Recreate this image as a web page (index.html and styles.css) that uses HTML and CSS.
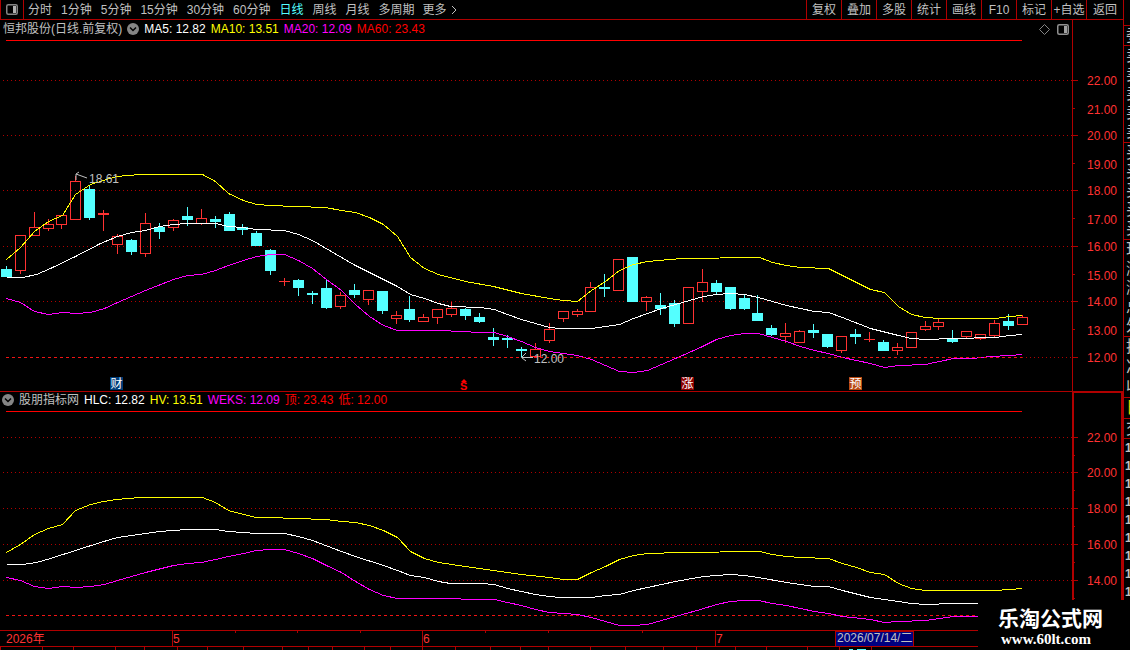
FILE: index.html
```html
<!DOCTYPE html>
<html lang="zh-CN">
<head>
    <meta charset="UTF-8">
    <meta name="viewport" content="width=device-width, initial-scale=1.0">
    <title>恒邦股份 日线</title>
    <link rel="stylesheet" href="styles.css">
</head>
<body>
    <main class="main">
        <nav class="toolbar">
            <button class="layout-btn" type="button" aria-label="布局">
                <svg width="12" height="11" viewBox="0 0 12 11">
                    <rect x="0.75" y="0.75" width="10.5" height="9.5" rx="1.5" fill="none" stroke="#858585" stroke-width="1.5"/>
                    <rect x="7" y="2" width="3" height="7" fill="#b0b0b0"/>
                </svg>
            </button>
            <div class="periods">
                <button type="button">分时</button>
                <button type="button">1分钟</button>
                <button type="button">5分钟</button>
                <button type="button">15分钟</button>
                <button type="button">30分钟</button>
                <button type="button">60分钟</button>
                <button type="button" class="active">日线</button>
                <button type="button">周线</button>
                <button type="button">月线</button>
                <button type="button">多周期</button>
                <button type="button" class="more">更多
                    <svg width="6" height="10" viewBox="0 0 6 10"><path d="M1 1L5 5L1 9" fill="none" stroke="#c0c0c0"/></svg>
                </button>
            </div>
            <div class="tools">
                <button type="button">复权</button>
                <button type="button">叠加</button>
                <button type="button">多股</button>
                <button type="button">统计</button>
                <button type="button">画线</button>
                <button type="button">F10</button>
                <button type="button">标记</button>
                <button type="button">+自选</button>
                <button type="button">返回</button>
            </div>
        </nav>

        <section class="panel">
            <header class="panel-head">
                <div class="legend">
                    <span>恒邦股份(日线.前复权)</span>
                    <svg width="12" height="12" viewBox="0 0 12 12"><circle cx="6" cy="6" r="6" fill="#858585"/><path d="M3 4.5L6 7.5L9 4.5" fill="none" stroke="#000" stroke-width="1.5"/></svg>
                    <span class="white">MA5: 12.82</span>
                    <span class="yellow">MA10: 13.51</span>
                    <span class="magenta">MA20: 12.09</span>
                    <span class="red">MA60: 23.43</span>
                    <div class="head-icons">
                        <svg width="11" height="11" viewBox="0 0 11 11"><path d="M5.5 0.5L10.5 5.5L5.5 10.5L0.5 5.5Z" fill="none" stroke="#858585"/></svg>
                        <svg width="12" height="11" viewBox="0 0 12 11">
                            <rect x="0.75" y="0.75" width="10.5" height="9.5" rx="1.5" fill="none" stroke="#909090" stroke-width="1.5"/>
                            <rect x="7" y="2" width="3" height="7" fill="#a0a0a0"/>
                        </svg>
                    </div>
                </div>
                <div class="corner"></div>
            </header>
            <svg class="chart" id="kline" viewBox="0 39 1123 352"></svg>
        </section>

        <section class="panel indicator">
            <header class="panel-head">
                <div class="legend">
                    <svg width="12" height="12" viewBox="0 0 12 12"><circle cx="6" cy="6" r="6" fill="#858585"/><path d="M3 4.5L6 7.5L9 4.5" fill="none" stroke="#000" stroke-width="1.5"/></svg>
                    <span>股朋指标网</span>
                    <span class="white">HLC: 12.82</span>
                    <span class="yellow">HV: 13.51</span>
                    <span class="magenta">WEKS: 12.09</span>
                    <span class="red">顶: 23.43</span>
                    <span class="red">低: 12.00</span>
                </div>
                <div class="corner"></div>
            </header>
            <svg class="chart" id="bands" viewBox="0 411 1123 219"></svg>
        </section>

        <svg class="chart" id="timeline" viewBox="0 630 1123 20"></svg>
    </main>

    <aside class="quote">
        <div class="group ratio"><span>委</span></div>
        <div class="group five"><span>卖</span><span>卖</span><span>卖</span><span>卖</span><span>卖</span></div>
        <div class="group five"><span>买</span><span>买</span><span>买</span><span>买</span><span>买</span></div>
        <div class="group five"><span>现</span><span>涨</span><span>涨</span><span>总</span><span>外</span></div>
        <div class="group three"><span>换</span><span>净</span><span>收</span></div>
        <div class="group tab"><span>日</span></div>
        <div class="group ratio"><span>交</span></div>
        <div class="group ticks"><span>1</span><span>1</span><span>1</span><span>1</span><span>1</span><span>1</span><span>1</span><span>1</span><span>1</span></div>
    </aside>

    <div class="watermark">
        <strong>乐淘公式网</strong>
        <span>www.60lt.com</span>
    </div>

    <script src="script.js"></script>
</body>
</html>
```
FILE: styles.css
```css
* {
    box-sizing: border-box;
}
body {
    margin: 0;
    min-height: 100vh;
    display: flex;
    overflow: hidden;
    position: relative;
    background: #000;
    color: #c0c0c0;
    font: 12px/18px "Liberation Sans", "Noto Sans CJK SC", sans-serif;
}
.main {
    flex: 1;
    min-width: 0;
}
button {
    margin: 0;
    padding: 0;
    border: none;
    background: none;
    color: inherit;
    font: inherit;
    white-space: nowrap;
    cursor: pointer;
}

/* toolbar */
.toolbar {
    display: flex;
    height: 20px;
    border-bottom: 1px solid #b00000;
}
.layout-btn {
    width: 24px;
    display: flex;
    align-items: center;
    justify-content: center;
    border-left: 1px solid #b00000;
    border-right: 1px solid #b00000;
}
.periods {
    flex: 1;
    display: flex;
    gap: 1px;
}
.periods button {
    padding: 0 4px;
}
.periods .active {
    color: #54ffff;
}
.periods .more {
    display: flex;
    align-items: center;
    gap: 4px;
    padding: 0 3px;
}
.tools {
    display: flex;
}
.tools button {
    width: 35px;
    border-left: 1px solid #b00000;
}
.tools button:last-child {
    width: 37px;
}

/* chart panels */
.panel-head {
    display: flex;
    height: 19px;
}
.legend {
    flex: 1;
    display: flex;
    align-items: center;
    gap: 5px;
    padding: 0 3px 1px;
    white-space: nowrap;
}
.head-icons {
    display: flex;
    align-items: center;
    gap: 7px;
    margin-left: auto;
}
.corner {
    width: 51px;
    border-left: 1px solid #b00000;
}
.indicator {
    border-top: 1px solid #b00000;
}
.indicator .legend {
    padding: 0 2px 3px;
    gap: 5px;
}
.indicator .corner {
    border: 2px solid #b00000;
    border-top-width: 1px;
    border-bottom: none;
}
.white {
    color: #fff;
}
.yellow {
    color: #ff0;
}
.magenta {
    color: #f0f;
}
.red {
    color: #f00;
}

.chart {
    display: block;
    width: 100%;
    height: auto;
    font-size: 12px;
}
.chart line,
.chart polyline,
.chart rect {
    shape-rendering: crispEdges;
}
.chart polyline {
    fill: none;
}
.frame {
    stroke: #b00000;
}
.frame-thick {
    stroke: #b00000;
    stroke-width: 2;
}
.grid {
    stroke: #b00000;
    stroke-dasharray: 1 3;
}
.floor {
    stroke: #f01414;
    stroke-dasharray: 3 3;
}
.top-line {
    stroke: #f00;
}
.up {
    fill: none;
    stroke: #ff3232;
}
.down {
    fill: #54ffff;
    stroke: #54ffff;
}
.upper {
    stroke: #ff0;
}
.middle {
    stroke: #fff;
}
.lower {
    stroke: #f0f;
}
.axis-text {
    fill: #ff3232;
}
.note {
    fill: #c0c0c0;
}
.note-line {
    fill: none;
    stroke: #c0c0c0;
}
.mark-text {
    fill: #fff;
}
.dividend {
    fill: #f00;
    font-size: 11px;
    font-weight: bold;
}

/* clipped quote column */
.quote {
    width: 7px;
    height: 600px;
    overflow: hidden;
    border-left: 1px solid #b00000;
    padding-top: 25px;
}
.group {
    display: flex;
    flex-direction: column;
    justify-content: space-around;
    overflow: hidden;
    border-top: 1px solid #b00000;
    padding-left: 2px;
    font-size: 16px;
    line-height: 18px;
}
.ratio {
    height: 20px;
}
.five {
    height: 97px;
}
.three {
    height: 61px;
}
.tab {
    height: 21px;
    color: #d8d800;
}
.ticks {
    height: 163px;
    padding-left: 1px;
    font-size: 12px;
    font-weight: bold;
}

.watermark {
    position: absolute;
    right: 0;
    bottom: 0;
    width: 152px;
    height: 50px;
    padding: 7px 0 0 20px;
    background: #000;
    color: #fff;
}
.watermark strong,
.watermark span {
    display: block;
}
.watermark strong {
    font-size: 21px;
    line-height: 24px;
}
.watermark span {
    padding-left: 3px;
    font: bold 15px/16px "Liberation Serif", serif;
}
```
FILE: script.js
```javascript
// [up, high, top, bottom, low]
const candles = [
    [0, 266, 269, 277, 277], [1, 235, 235, 271, 274], [1, 212, 227, 236, 236], [1, 219, 224, 229, 231],
    [1, 215, 215, 225, 229], [1, 176, 181, 220, 220], [0, 186, 189, 218, 220], [1, 210, 213, 215, 231],
    [1, 234, 236, 245, 254], [0, 239, 240, 252, 255], [1, 213, 223, 254, 257], [0, 223, 227, 232, 239],
    [1, 219, 220, 228, 231], [0, 207, 216, 220, 226], [1, 209, 218, 224, 225], [0, 216, 219, 222, 228],
    [0, 212, 214, 231, 231], [0, 224, 227, 230, 235], [0, 231, 233, 246, 246], [0, 249, 250, 271, 275],
    [1, 278, 281, 282, 286], [0, 279, 280, 288, 296], [0, 291, 293, 295, 304], [0, 280, 288, 308, 309],
    [1, 292, 295, 307, 309], [0, 284, 290, 295, 298], [1, 290, 290, 300, 305], [0, 291, 291, 311, 314],
    [1, 311, 315, 319, 324], [0, 296, 309, 320, 322], [1, 314, 317, 322, 322], [1, 309, 309, 318, 324],
    [1, 302, 308, 315, 317], [0, 308, 309, 316, 320], [0, 313, 317, 322, 323], [0, 328, 337, 340, 346],
    [0, 335, 338, 340, 348], [0, 347, 349, 351, 357], [1, 343, 349, 357, 357], [1, 323, 329, 341, 343],
    [1, 311, 311, 319, 322], [1, 309, 311, 315, 317], [1, 282, 287, 312, 312], [0, 274, 287, 289, 297],
    [1, 259, 259, 291, 291], [0, 257, 257, 302, 302], [1, 296, 297, 302, 311], [0, 293, 305, 309, 315],
    [0, 300, 303, 324, 327], [1, 287, 287, 324, 324], [1, 269, 282, 292, 302], [0, 280, 283, 292, 295],
    [0, 287, 287, 309, 310], [0, 295, 298, 309, 310], [0, 295, 313, 321, 321], [0, 325, 328, 335, 336],
    [1, 323, 333, 337, 343], [1, 330, 331, 343, 343], [0, 324, 330, 333, 338], [0, 334, 334, 347, 348],
    [1, 336, 336, 351, 353], [0, 329, 334, 337, 344], [1, 332, 339, 340, 342], [0, 340, 342, 351, 351],
    [1, 343, 347, 351, 355], [1, 332, 332, 348, 348], [1, 321, 326, 330, 331], [1, 319, 322, 327, 330],
    [0, 330, 339, 342, 343], [1, 331, 331, 337, 338], [1, 334, 334, 339, 340], [1, 320, 323, 336, 338],
    [0, 314, 321, 326, 330], [1, 315, 317, 325, 325]
];

const bands = {
    upper: [[6, 259], [20, 247], [34, 231], [48, 221], [62, 215], [75, 194], [90, 184], [103, 180], [116, 176], [140, 174], [202, 174],
        [215, 181], [228, 193], [243, 200], [256, 204], [270, 205], [295, 206], [325, 207], [341, 210], [355, 212], [369, 217],
        [383, 224], [397, 236], [410, 257], [424, 268], [438, 274], [465, 281], [493, 286], [521, 293], [549, 298], [563, 300],
        [577, 301], [591, 290], [605, 281], [619, 270], [633, 264], [647, 261], [681, 258], [759, 257], [772, 262], [786, 265],
        [800, 267], [828, 268], [842, 275], [856, 282], [870, 289], [884, 292], [898, 306], [911, 314], [925, 317], [939, 318],
        [995, 318], [1009, 316], [1022, 315]],
    middle: [[6, 277], [22, 277], [36, 274], [50, 268], [75, 256], [100, 243], [117, 236], [131, 232], [145, 230], [159, 226],
        [173, 224], [187, 223], [215, 223], [228, 226], [242, 227], [256, 229], [284, 230], [298, 234], [312, 240], [341, 257],
        [355, 265], [383, 279], [397, 286], [410, 294], [424, 298], [438, 303], [450, 306], [480, 307], [494, 309], [507, 314],
        [521, 319], [535, 323], [549, 327], [560, 328], [591, 328], [605, 326], [619, 324], [633, 318], [661, 308], [675, 304],
        [703, 296], [716, 294], [730, 293], [744, 294], [758, 297], [786, 305], [814, 311], [828, 312], [842, 317], [870, 328],
        [898, 335], [911, 338], [925, 339], [953, 338], [995, 337], [1009, 335], [1022, 334]],
    lower: [[6, 298], [20, 302], [34, 311], [48, 314], [62, 312], [76, 313], [90, 312], [104, 308], [117, 302], [145, 290],
        [173, 279], [187, 275], [201, 274], [215, 270], [228, 265], [243, 260], [256, 256], [270, 254], [284, 254], [298, 260],
        [312, 268], [326, 279], [341, 290], [355, 304], [369, 316], [383, 325], [397, 330], [440, 330], [480, 332], [494, 332],
        [507, 336], [521, 341], [535, 347], [549, 351], [577, 355], [591, 359], [619, 371], [633, 372], [647, 370], [661, 364],
        [675, 358], [700, 347], [716, 339], [730, 335], [744, 333], [758, 333], [772, 337], [786, 341], [800, 346], [814, 350],
        [828, 353], [842, 357], [870, 363], [884, 367], [898, 365], [925, 364], [939, 361], [953, 358], [972, 358], [990, 356],
        [1009, 355], [1022, 354]]
};

const line = (cls, x1, y1, x2, y2) => `<line class="${cls}" x1="${x1}" y1="${y1}" x2="${x2}" y2="${y2}"/>`;
const text = (cls, x, y, str) => `<text class="${cls}" x="${x}" y="${y}">${str}</text>`;

function drawBands(toY) {
    return Object.entries(bands).map(([name, pts]) =>
        `<polyline class="${name}" points="${pts.map(([x, y]) => `${x + 0.5},${toY(y) + 0.5}`).join(' ')}"/>`
    ).join('');
}

function drawCandles() {
    return candles.map(([up, high, top, bottom, low], i) => {
        const x = Math.floor(6.3 + i * 13.92);
        const cls = up ? 'up' : 'down';
        let out = '';
        if (high < top) out += line(cls, x + 0.5, high, x + 0.5, top);
        if (low > bottom) out += line(cls, x + 0.5, bottom, x + 0.5, low);
        if (bottom - top < 2) return out + line(cls, x - 5, top + 0.5, x + 6, top + 0.5) + line(cls, x + 0.5, high, x + 0.5, low);
        return out + `<rect class="${cls}" x="${x - 4.5}" y="${top + 0.5}" width="10" height="${bottom - top - 1}"/>`;
    }).join('');
}

function badge(x, color, str) {
    return `<rect x="${x}" y="377" width="13" height="13" fill="${color}"/>` + text('mark-text', x + 0.5, 388, str);
}

// main chart
let out = [80, 135, 190, 246, 301].map(y => line('grid', 3, y + 0.5, 1072, y + 0.5)).join('');
out += line('grid', 1022, 357.5, 1072, 357.5);
out += drawCandles();
out += drawBands(y => y);
out += line('floor', 6, 357.5, 1022, 357.5);
out += line('top-line', 6, 40.5, 1022, 40.5);
out += line('frame', 1072.5, 39, 1072.5, 391);
[80, 108, 135, 163, 190, 218, 246, 274, 301, 329, 357].forEach((y, i) => {
    out += line('frame', 1073, y + 0.5, i % 2 ? 1075 : 1078, y + 0.5);
    out += text('axis-text', 1087, y + (i % 2 ? 6 : 5), (22 - i) + '.00');
});
out += '<path class="note-line" d="M87 178L76 174M76 180V174L79 172"/>' + text('note', 89, 183, '18.61');
out += '<path class="note-line" d="M533 357.5H522M526 353L521.5 357.5L526 361"/>' + text('note', 534, 363, '12.00');
out += badge(110, '#003c78', '财') + badge(681, '#8c0000', '涨') + badge(849, '#b84810', '预');
out += text('dividend', 460, 390, 'S') + '<path d="M461 382L464 379L467 382Z" fill="#f00"/>';
document.getElementById('kline').innerHTML = out;

// indicator chart
out = [437, 472, 508, 544, 580].map((y, i) =>
    line('grid', 3, y + 0.5, 1072, y + 0.5) +
    line('frame', 1074, y + 0.5, 1078, y + 0.5) +
    line('frame', 1074, y + 18.5, 1075, y + 18.5) +
    text('axis-text', 1087, y + 5, (22 - i * 2) + '.00')
).join('');
out += line('floor', 6, 615.5, 1022, 615.5);
out += drawBands(y => Math.round(615.5 - (357 - y) * 0.646));
out += line('top-line', 6, 411.5, 1022, 411.5);
out += line('frame-thick', 1073, 411, 1073, 630) + line('frame-thick', 1122, 411, 1122, 630);
document.getElementById('bands').innerHTML = out;

// time axis
out = line('frame', 0, 630.5, 1123, 630.5) + line('frame', 0, 646.5, 1123, 646.5);
[[172, '5'], [422, '6'], [715, '7']].forEach(([x, str]) => {
    out += line('frame', x + 0.5, 631, x + 0.5, 646) + text('axis-text', x + 1, 643, str);
});
out += text('axis-text', 6, 643, '2026年');
[235, 297, 360, 485, 548, 642].forEach(x => out += line('frame', x + 0.5, 631, x + 0.5, 633));
[0, 42, 73, 115, 144, 177, 207, 243, 282, 308, 332, 364, 390, 422, 455, 490, 520, 548, 590, 625, 663, 696, 735, 766, 807, 839, 871]
    .forEach(x => out += line('frame', x + 0.5, 647, x + 0.5, 650));
out += '<rect x="835.5" y="631" width="78" height="15" fill="#000080" class="frame"/>' + text('note', 837, 642, '2026/07/14/二');
out += '<rect x="849" y="649" width="4" height="1" fill="#54ffff"/><rect x="857" y="649" width="9" height="1" fill="#54ffff"/>';
document.getElementById('timeline').innerHTML = out;
```
